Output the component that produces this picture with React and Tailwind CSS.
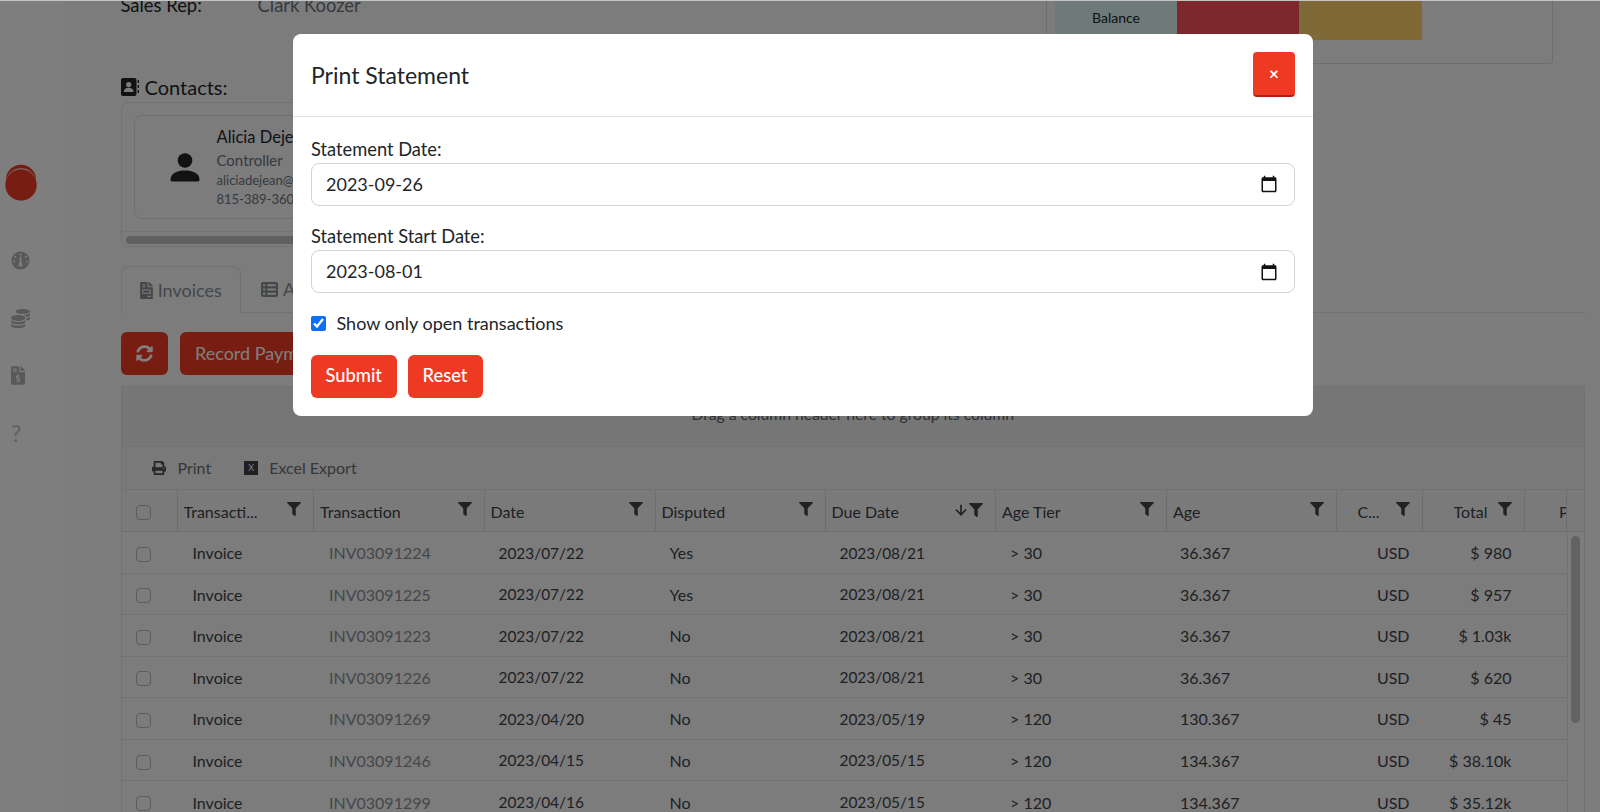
import React from "react";
import { FaSyncAlt, FaPrint, FaFilter, FaCoins, FaFileInvoiceDollar, FaFileInvoice } from "react-icons/fa";
import { FaTableList } from "react-icons/fa6";
import { ArrowDown } from "lucide-react";

const rows = [
  ["INV03091224","2023/07/22","Yes","2023/08/21","> 30","36.367","$ 980"],
  ["INV03091225","2023/07/22","Yes","2023/08/21","> 30","36.367","$ 957"],
  ["INV03091223","2023/07/22","No","2023/08/21","> 30","36.367","$ 1.03k"],
  ["INV03091226","2023/07/22","No","2023/08/21","> 30","36.367","$ 620"],
  ["INV03091269","2023/04/20","No","2023/05/19","> 120","130.367","$ 45"],
  ["INV03091246","2023/04/15","No","2023/05/15","> 120","134.367","$ 38.10k"],
  ["INV03091299","2023/04/16","No","2023/05/15","> 120","134.367","$ 35.12k"],
];

const cols = "grid grid-cols-[56px_136.5px_170.5px_171px_170px_170.5px_171px_170px_85.5px_102px_59.5px]";

function Head({ padRight, children, sort }) {
  return (
    <div className={`relative flex h-full items-center border-r border-[#dcdcdc] pl-[6px] ${padRight || ""}`}>
      <span className={`truncate pt-[2px] ${padRight ? "ml-auto" : ""}`}>{children}</span>
      <span className="absolute right-[12px] top-[12px] flex items-center text-[#40454a]">
        {sort && <ArrowDown strokeWidth={2.5} className="size-[16px]" />}
        <FaFilter className="size-[14px]" />
      </span>
    </div>
  );
}

function GridCheck() {
  return <span className="mt-[4px] block size-[15px] rounded-[4px] border border-[#b4b8bd]" />;
}

function Field({ label, value }) {
  return (
    <div className="flex flex-col">
      <label className="mb-[1px] text-[18.3px] leading-[25px] text-[#212529]">{label}</label>
      <div className="flex h-[43px] w-full items-center rounded-[8px] border border-[#ced4da] bg-white pl-[14px] pr-[16px]">
        <input type="text" readOnly defaultValue={value} className="min-w-0 flex-1 text-[18px] text-[#212529] outline-none" />
        <svg viewBox="0 0 24 24" className="size-[18px]" fill="#111">
          <path d="M20 3h-1V1h-2v2H7V1H5v2H4c-1.1 0-2 .9-2 2v16c0 1.1.9 2 2 2h16c1.1 0 2-.9 2-2V5c0-1.1-.9-2-2-2zm0 18H4V8h16v13z" />
        </svg>
      </div>
    </div>
  );
}

function Gauge() {
  return (
    <svg viewBox="0 0 20 20" className="size-[19px]">
      <circle cx="10" cy="10" r="9.5" fill="#b3b3b3" />
      <circle cx="10" cy="3.6" r="1.1" fill="#f6f6f6" />
      <circle cx="4.4" cy="6.2" r="1.1" fill="#f6f6f6" />
      <circle cx="15.6" cy="6.2" r="1.1" fill="#f6f6f6" />
      <circle cx="3.2" cy="11" r="1.1" fill="#f6f6f6" />
      <circle cx="16.8" cy="11" r="1.1" fill="#f6f6f6" />
      <rect x="9" y="6" width="2" height="8" fill="#f6f6f6" />
      <circle cx="10" cy="14.4" r="2.3" fill="#f6f6f6" />
    </svg>
  );
}

function ContactBook() {
  return (
    <svg viewBox="0 0 18 18" className="mr-[6px] size-[18px]" fill="#212529">
      <rect x="0" y="0" width="15.5" height="18" rx="2" />
      <circle cx="7.7" cy="6.6" r="2.6" fill="#f8f8f8" />
      <path d="M2.8 14c0-2.9 2.2-4.2 4.9-4.2s4.9 1.3 4.9 4.2z" fill="#f8f8f8" />
      <rect x="16.6" y="2" width="1.4" height="3" />
      <rect x="16.6" y="7" width="1.4" height="3" />
      <rect x="16.6" y="12" width="1.4" height="3" />
    </svg>
  );
}

function Person() {
  return (
    <svg viewBox="0 0 30 29" className="h-[29px] w-[30px]" fill="#212529">
      <circle cx="15" cy="7.5" r="7.3" />
      <path d="M.5 27C.5 20 7 17.5 15 17.5S29.5 20 29.5 27q0 1.5-2 1.5h-25q-2 0-2-1.5z" />
    </svg>
  );
}

export default function App() {
  return (
    <div className="relative h-[812px] w-[1600px] overflow-hidden bg-[#f8f8f8] font-['Lato','Liberation_Sans',sans-serif] text-[16px] text-[#212529]">
      <div className="flex h-full">
        <aside className="flex h-full w-[65px] shrink-0 flex-col items-start bg-[#fdfdfd] pl-[5px] pt-[164px] text-[#b3b3b3]">
          <svg viewBox="0 0 32 37" className="h-[37px] w-[32px]">
            <circle cx="16" cy="15.7" r="15" fill="#ee3a22" />
            <circle cx="16" cy="19.5" r="15.2" fill="#f4f4f4" />
            <circle cx="16" cy="21" r="15.7" fill="#ee3a22" />
          </svg>
          <div className="mt-[50px] flex flex-col gap-[38.5px] pl-[6px]">
            <Gauge />
            <FaCoins className="size-[19px]" />
            <FaFileInvoiceDollar className="h-[19px] w-[14px]" />
            <span className="h-[19px] text-[23px] leading-[19px] text-[#c4c4c4]">?</span>
          </div>
        </aside>

        <main className="flex min-w-0 flex-1 flex-col pl-[55.5px] pr-[15px]">
          <div className="relative h-[73px] shrink-0">
            <div className="-mt-[7px] flex text-[18.4px] leading-[24px]">
              <span className="w-[137px]">Sales Rep:</span>
              <span className="text-[#6c757d]">Clark Koozer</span>
            </div>
            <div className="absolute bottom-[9px] left-[925.5px] flex h-[120px] w-[507px] rounded-b-[4px] border border-[#dcdcdc] pl-[8px] pb-[23px]">
              <div className="flex w-[122px] flex-col items-center justify-end bg-[#dcf5f0] pb-[10.5px] text-[14px] leading-[24px] text-[#212529]"><span>Outstanding</span><span>Balance</span></div>
              <div className="w-[122px] bg-[#fa5058]" />
              <div className="w-[123px] bg-[#ffd26e]" />
              <div className="flex w-[122px] flex-col items-center justify-end pb-[37px] text-[14px] leading-[21px]"><span>Last Payment</span></div>
            </div>
          </div>

          <div className="flex h-[29px] shrink-0 items-center pb-[2px] text-[20px] leading-[24px]">
            <ContactBook />
            Contacts:
          </div>

          <section className="h-[145px] w-[1000px] shrink-0 rounded-[8px] border border-[#e2e2e2]">
            <div className="h-[129px] border-b border-[#e8e8e8] pl-[12px] pt-[12px]">
              <div className="flex h-[104px] w-[400px] rounded-[8px] border border-[#dedede]">
                <div className="flex w-[65px] items-center justify-end">
                  <Person />
                </div>
                <div className="pl-[17px] pt-[9px]">
                  <div className="text-[16.5px] leading-[24px]">Alicia Dejean</div>
                  <div className="text-[15px] leading-[22px] text-[#6c757d]">Controller</div>
                  <div className="text-[13px] leading-[19px] text-[#6c757d]">aliciadejean@example.com</div>
                  <div className="text-[13px] leading-[19px] text-[#6c757d]">815-389-3604</div>
                </div>
              </div>
            </div>
            <div className="ml-[4px] mt-[4px] h-[8px] w-[900px] rounded-full bg-[#c0c0c0]" />
          </section>

          <nav className="mt-[19px] flex h-[47px] shrink-0 border-b border-[#e2e2e2] text-[18px] text-[#888e94]">
            <div className="-mb-px flex w-[120.5px] items-center justify-center gap-[5px] rounded-t-[8px] border border-b-0 border-[#e2e2e2] bg-[#f8f8f8]">
              <FaFileInvoice className="h-[17px] w-[13px]" />Invoices
            </div>
            <div className="flex items-center gap-[5px] pl-[20px]">
              <FaTableList className="size-[17px]" />Activity
            </div>
          </nav>

          <div className="mt-[19px] flex h-[43px] shrink-0 gap-[12px]">
            <button className="flex w-[47.5px] items-center justify-center rounded-[6px] bg-[#ee3a22] text-white"><FaSyncAlt className="size-[17px]" /></button>
            <button className="rounded-[6px] bg-[#ee3a22] px-[15px] text-[18px] text-white">Record Payment</button>
          </div>

          <section className="mt-[11px] flex min-h-0 flex-1 flex-col border border-b-0 border-[#e4e4e4]">
            <div className="flex h-[60px] shrink-0 items-center justify-center border-b border-[#e4e4e4] bg-[#ececec] pb-[4px] text-[15.7px] text-[#5a5f64]">Drag a column header here to group its column</div>
            <div className="flex h-[43px] shrink-0 items-center border-b border-[#e4e4e4] bg-[#f2f2f2] pl-[30px] text-[16px] text-[#6a6f74]">
              <FaPrint className="size-[14px] text-[#4a4f55]" />
              <span className="ml-[12px]">Print</span>
              <span className="ml-[33px] flex size-[14px] items-center justify-center bg-[#3c4045] text-[9px] text-white">X</span>
              <span className="ml-[11px]">Excel Export</span>
            </div>
            <div className={`${cols} h-[42px] shrink-0 items-center border-b border-[#dcdcdc] bg-[#f4f4f4] text-[16px] text-[#3d4247]`}>
              <div className="flex h-full items-center border-r border-[#dcdcdc] pl-[14px]"><GridCheck /></div>
              <Head>Transacti...</Head>
              <Head>Transaction</Head>
              <Head>Date</Head>
              <Head>Disputed</Head>
              <Head sort>Due Date</Head>
              <Head>Age Tier</Head>
              <Head>Age</Head>
              <Head padRight="pr-[42px]">C...</Head>
              <Head padRight="pr-[36px]">Total</Head>
              <div className="flex h-full items-center justify-end overflow-hidden pr-[17px]"><span className="flex h-full w-[8px] items-center overflow-hidden border-r border-[#dcdcdc] pt-[2px]">Payment</span></div>
            </div>
            <div className="relative min-h-0 flex-1 overflow-hidden">
              {rows.map((r) => (
                <div key={r[0]} className={`${cols} h-[41.55px] items-center border-b border-[#e4e4e4] text-[16px] text-[#3d4247]`}>
                  <div className="pl-[14px]"><GridCheck /></div>
                  <div className="pl-[15px] pt-[2px]">Invoice</div>
                  <div className="pl-[15px] pt-[2px] text-[#8a8f94]">{r[0]}</div>
                  <div className="pl-[14px] pt-[2px] text-[15.4px]">{r[1]}</div>
                  <div className="pl-[14px] pt-[2px]">{r[2]}</div>
                  <div className="pl-[14px] pt-[2px] text-[15.4px]">{r[3]}</div>
                  <div className="pl-[14px] pt-[2px]">{r[4]}</div>
                  <div className="pl-[13px] pt-[2px]">{r[5]}</div>
                  <div className="pr-[13px] pt-[2px] text-right">USD</div>
                  <div className="pr-[13px] pt-[2px] text-right">{r[6]}</div>
                  <div />
                </div>
              ))}
              <div className="absolute right-0 top-0 h-full w-[17px] border-l border-[#e4e4e4] bg-[#f8f8f8]">
                <div className="ml-[3px] mt-[4px] h-[187px] w-[9px] rounded-full bg-[#c4c4c4]" />
              </div>
            </div>
          </section>
        </main>
      </div>

      <div className="fixed inset-0 bg-black/50" />
      <div className="absolute inset-x-0 top-0 h-px bg-[#c4c4c4]" />
      <div className="absolute left-[292.5px] top-[34px] flex h-[382px] w-[1020.5px] flex-col rounded-[8px] bg-white">
        <header className="flex h-[82.5px] shrink-0 items-center justify-between border-b border-[#dee2e6] pl-[18.5px] pr-[18px]">
          <h2 className="text-[23px] text-[#212529]">Print Statement</h2>
          <button className="flex h-[45px] w-[42px] items-center justify-center rounded-[4px] border-b-2 border-[#b02010] bg-[#ee3a22] text-[17px] font-bold text-white">×</button>
        </header>
        <div className="flex flex-col pl-[18.5px] pr-[18px] pt-[20px]">
          <div className="flex flex-col gap-[18.5px]">
            <Field label="Statement Date:" value="2023-09-26" />
            <Field label="Statement Start Date:" value="2023-08-01" />
          </div>
          <label className="mt-[23px] flex h-[15px] items-center text-[18px] text-[#212529]">
            <input type="checkbox" defaultChecked className="size-[14.5px] accent-[#0d6efd]" />
            <span className="ml-[11px]">Show only open transactions</span>
          </label>
          <div className="mt-[23.5px] flex gap-[11px]">
            <button className="h-[43px] w-[85.5px] rounded-[6px] bg-[#ee3a22] text-[18.3px] font-medium text-white">Submit</button>
            <button className="h-[43px] w-[75px] rounded-[6px] bg-[#ee3a22] text-[18.3px] font-medium text-white">Reset</button>
          </div>
        </div>
      </div>
    </div>
  );
}
